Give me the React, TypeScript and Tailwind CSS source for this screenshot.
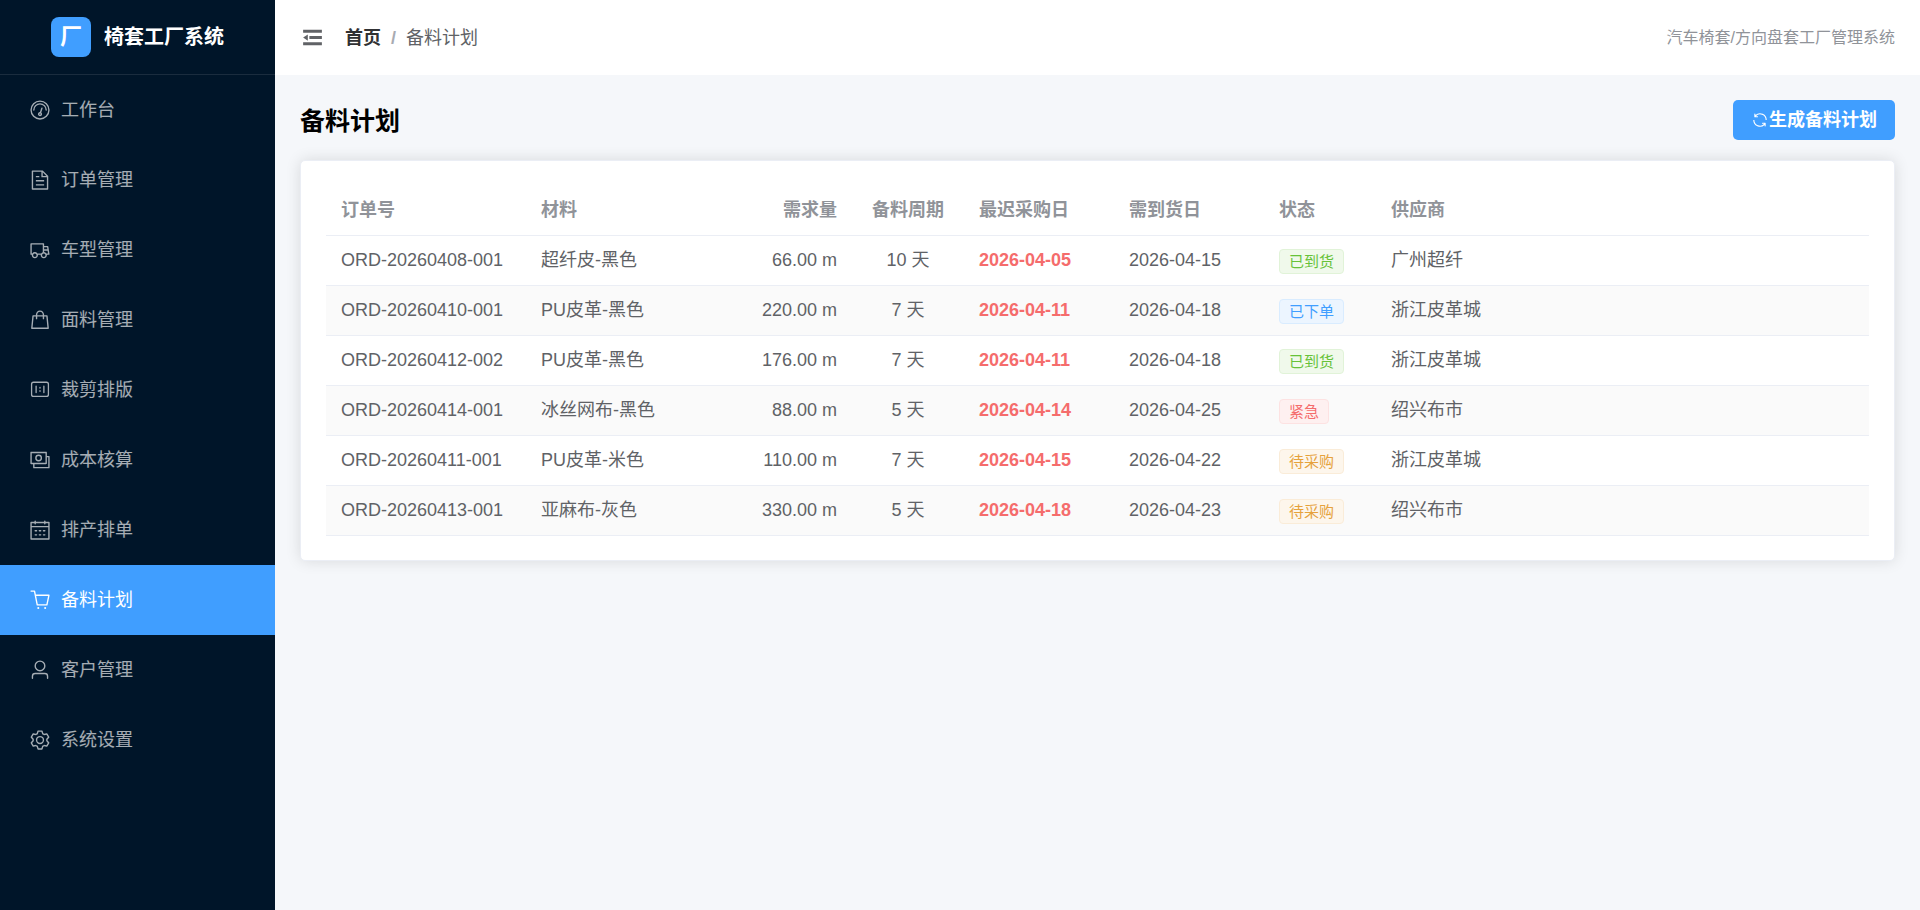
import { useState, type FC } from "react";

const icons: Record<string, string> = {
  odometer:
    "M512 896a384 384 0 1 0 0-768 384 384 0 0 0 0 768m0 64a448 448 0 1 1 0-896 448 448 0 0 1 0 896M192 512a320 320 0 1 1 640 0 32 32 0 1 1-64 0 256 256 0 1 0-512 0 32 32 0 0 1-64 0M570.432 627.84A96 96 0 1 1 509.568 608l60.992-187.776A32 32 0 1 1 631.424 440l-60.992 187.776zM502.08 734.464a32 32 0 1 0 19.84-60.928 32 32 0 0 0-19.84 60.928",
  document:
    "M832 384H576V128H192v768h640zm-26.496-64L640 154.496V320zM160 64h480l256 256v608a32 32 0 0 1-32 32H160a32 32 0 0 1-32-32V96a32 32 0 0 1 32-32m160 448h384v64H320zm0-192h160v64H320zm0 384h384v64H320z",
  van: "M128.896 736H96a32 32 0 0 1-32-32V224a32 32 0 0 1 32-32h576a32 32 0 0 1 32 32v96h164.544a32 32 0 0 1 31.616 27.136l54.144 352A32 32 0 0 1 922.688 736h-91.52a144 144 0 1 1-286.272 0H415.104a144 144 0 1 1-286.272 0zm23.36-64a143.872 143.872 0 0 1 239.488 0H568.32c17.088-25.6 42.24-45.376 71.744-55.808V256H128v416zm655.488 0h77.632l-19.648-128H704v64.896A144 144 0 0 1 807.744 672m48.128-192-14.72-96H704v96zM688 832a80 80 0 1 0 0-160 80 80 0 0 0 0 160m-416 0a80 80 0 1 0 0-160 80 80 0 0 0 0 160",
  goods:
    "M320 288v-22.336C320 154.688 405.504 64 512 64s192 90.688 192 201.664v22.4h131.072a32 32 0 0 1 31.808 28.8l57.6 576a32 32 0 0 1-31.808 35.2H131.328a32 32 0 0 1-31.808-35.2l57.6-576a32 32 0 0 1 31.808-28.8zm64 0h256v-22.336C640 189.248 582.272 128 512 128s-128 61.248-128 137.664v22.4zm-64 64H217.92l-51.2 512h690.56l-51.264-512H704v96a32 32 0 1 1-64 0v-96H384v96a32 32 0 0 1-64 0z",
  scale:
    "M813.176 180.706a60.235 60.235 0 0 1 60.236 60.235v481.883a60.235 60.235 0 0 1-60.236 60.235H210.824a60.235 60.235 0 0 1-60.236-60.235V240.94a60.235 60.235 0 0 1 60.236-60.235h602.352zm0-60.235H210.824A120.47 120.47 0 0 0 90.353 240.94v481.883a120.47 120.47 0 0 0 120.47 120.47h602.353a120.47 120.47 0 0 0 120.471-120.47V240.94a120.47 120.47 0 0 0-120.47-120.47zm-120.47 180.705a30.118 30.118 0 0 0-30.118 30.118v301.177a30.118 30.118 0 0 0 60.236 0V331.294a30.118 30.118 0 0 0-30.118-30.118m-361.412 0a30.118 30.118 0 0 0-30.118 30.118v301.177a30.118 30.118 0 1 0 60.236 0V331.294a30.118 30.118 0 0 0-30.118-30.118M512 361.412a30.118 30.118 0 0 0-30.118 30.117v30.118a30.118 30.118 0 0 0 60.236 0V391.53A30.118 30.118 0 0 0 512 361.412M512 512a30.118 30.118 0 0 0-30.118 30.118v30.117a30.118 30.118 0 0 0 60.236 0v-30.117A30.118 30.118 0 0 0 512 512",
  money:
    "M256 640v192h640V384H768v-64h150.976c14.272 0 19.456 1.472 24.64 4.288a29.06 29.06 0 0 1 12.16 12.096c2.752 5.184 4.224 10.368 4.224 24.64v493.952c0 14.272-1.472 19.456-4.288 24.64a29.06 29.06 0 0 1-12.096 12.16c-5.184 2.752-10.368 4.224-24.64 4.224H233.024c-14.272 0-19.456-1.472-24.64-4.288a29.06 29.06 0 0 1-12.16-12.096c-2.688-5.184-4.224-10.368-4.224-24.576V640zM768 192H128v448h640zm64-22.976v493.952c0 14.272-1.472 19.456-4.288 24.64a29.06 29.06 0 0 1-12.096 12.16c-5.184 2.752-10.368 4.224-24.64 4.224H105.024c-14.272 0-19.456-1.472-24.64-4.288a29.06 29.06 0 0 1-12.16-12.096C65.536 682.432 64 677.248 64 663.04V169.024c0-14.272 1.472-19.456 4.288-24.64a29.06 29.06 0 0 1 12.096-12.16C85.568 129.536 90.752 128 104.96 128h685.952c14.272 0 19.456 1.472 24.64 4.288a29.06 29.06 0 0 1 12.16 12.096c2.752 5.184 4.224 10.368 4.224 24.64zM448 576a160 160 0 1 1 0-320 160 160 0 0 1 0 320m0-64a96 96 0 1 0 0-192 96 96 0 0 0 0 192",
  calendar:
    "M128 384v512h768V192H768v32a32 32 0 1 1-64 0v-32H320v32a32 32 0 0 1-64 0v-32H128v128h768v64zm192-256h384V96a32 32 0 1 1 64 0v32h160a32 32 0 0 1 32 32v768a32 32 0 0 1-32 32H96a32 32 0 0 1-32-32V160a32 32 0 0 1 32-32h160V96a32 32 0 0 1 64 0zm-32 384h64a32 32 0 0 1 0 64h-64a32 32 0 0 1 0-64m0 192h64a32 32 0 1 1 0 64h-64a32 32 0 1 1 0-64m192-192h64a32 32 0 0 1 0 64h-64a32 32 0 0 1 0-64m0 192h64a32 32 0 1 1 0 64h-64a32 32 0 1 1 0-64m192-192h64a32 32 0 1 1 0 64h-64a32 32 0 1 1 0-64m0 192h64a32 32 0 1 1 0 64h-64a32 32 0 1 1 0-64",
  cart: "M432 928a48 48 0 1 1 0-96 48 48 0 0 1 0 96m320 0a48 48 0 1 1 0-96 48 48 0 0 1 0 96M96 128a32 32 0 0 1 0-64h160a32 32 0 0 1 31.36 25.728L320.64 256H928a32 32 0 0 1 31.296 38.72l-96 448A32 32 0 0 1 832 768H384a32 32 0 0 1-31.36-25.728L229.76 128zm314.24 576h395.904l82.304-384H333.44z",
  user: "M512 512a192 192 0 1 0 0-384 192 192 0 0 0 0 384m0 64a256 256 0 1 1 0-512 256 256 0 0 1 0 512m320 320v-96a96 96 0 0 0-96-96H288a96 96 0 0 0-96 96v96a32 32 0 1 1-64 0v-96a160 160 0 0 1 160-160h448a160 160 0 0 1 160 160v96a32 32 0 1 1-64 0",
  setting:
    "M600.704 64a32 32 0 0 1 30.464 22.208l35.2 109.376c14.784 7.232 28.928 15.36 42.432 24.512l112.384-24.192a32 32 0 0 1 34.432 15.36L944.32 364.8a32 32 0 0 1-4.032 37.504l-77.12 85.12a357 357 0 0 1 0 49.024l77.12 85.248a32 32 0 0 1 4.032 37.504l-88.704 153.6a32 32 0 0 1-34.432 15.296L708.8 803.904c-13.44 9.088-27.648 17.28-42.368 24.512l-35.264 109.376A32 32 0 0 1 600.704 960H423.296a32 32 0 0 1-30.464-22.208L357.696 828.48a352 352 0 0 1-42.56-24.64l-112.32 24.256a32 32 0 0 1-34.432-15.36L79.68 659.2a32 32 0 0 1 4.032-37.504l77.12-85.248a357 357 0 0 1 0-48.896l-77.12-85.248A32 32 0 0 1 79.68 364.8l88.704-153.6a32 32 0 0 1 34.432-15.296l112.32 24.256c13.568-9.152 27.776-17.408 42.56-24.64l35.2-109.312A32 32 0 0 1 423.232 64H600.64zm-23.424 64H446.72l-36.352 113.088-24.512 11.968a294 294 0 0 0-34.816 20.096l-22.656 15.36-116.224-25.088-65.28 113.152 79.68 88.192-1.92 27.136a293 293 0 0 0 0 40.192l1.92 27.136-79.808 88.192 65.344 113.152 116.224-25.024 22.656 15.296a294 294 0 0 0 34.816 20.096l24.512 11.968L446.72 896h130.688l36.48-113.152 24.448-11.904a288 288 0 0 0 34.752-20.096l22.592-15.296 116.288 25.024 65.28-113.152-79.744-88.192 1.92-27.136a293 293 0 0 0 0-40.256l-1.92-27.136 79.808-88.128-65.344-113.152-116.288 24.96-22.592-15.232a288 288 0 0 0-34.752-20.096l-24.448-11.904L577.344 128zM512 320a192 192 0 1 1 0 384 192 192 0 0 1 0-384m0 64a128 128 0 1 0 0 256 128 128 0 0 0 0-256",
  fold: "M896 192H128v128h768zm0 256H384v128h512zm0 256H128v128h768zM320 384 128 512l192 128z",
  refresh:
    "M771.776 794.88A384 384 0 0 1 128 512h64a320 320 0 0 0 555.712 216.448H654.72a32 32 0 1 1 0-64h149.056a32 32 0 0 1 32 32v148.928a32 32 0 1 1-64 0v-50.56zM276.288 295.616h92.992a32 32 0 0 1 0 64H220.16a32 32 0 0 1-32-32V178.56a32 32 0 0 1 64 0v50.56A384 384 0 0 1 896.128 512h-64a320 320 0 0 0-555.776-216.384z",
};

type IconProps = {
  name: string;
  className: string;
};

const Icon: FC<IconProps> = ({ name, className }) => (
  <svg
    viewBox="0 0 1024 1024"
    fill="currentColor"
    aria-hidden="true"
    className={`shrink-0 ${className}`}
  >
    <path d={icons[name]} />
  </svg>
);

const menu = [
  { icon: "odometer", label: "工作台" },
  { icon: "document", label: "订单管理" },
  { icon: "van", label: "车型管理" },
  { icon: "goods", label: "面料管理" },
  { icon: "scale", label: "裁剪排版" },
  { icon: "money", label: "成本核算" },
  { icon: "calendar", label: "排产排单" },
  { icon: "cart", label: "备料计划" },
  { icon: "user", label: "客户管理" },
  { icon: "setting", label: "系统设置" },
];

type Plan = {
  order: string;
  material: string;
  amount: string;
  days: number;
  buyDate: string;
  arriveDate: string;
  status: string;
  supplier: string;
};

const plans: Plan[] = [
  {
    order: "ORD-20260408-001",
    material: "超纤皮-黑色",
    amount: "66.00",
    days: 10,
    buyDate: "2026-04-05",
    arriveDate: "2026-04-15",
    status: "已到货",
    supplier: "广州超纤",
  },
  {
    order: "ORD-20260410-001",
    material: "PU皮革-黑色",
    amount: "220.00",
    days: 7,
    buyDate: "2026-04-11",
    arriveDate: "2026-04-18",
    status: "已下单",
    supplier: "浙江皮革城",
  },
  {
    order: "ORD-20260412-002",
    material: "PU皮革-黑色",
    amount: "176.00",
    days: 7,
    buyDate: "2026-04-11",
    arriveDate: "2026-04-18",
    status: "已到货",
    supplier: "浙江皮革城",
  },
  {
    order: "ORD-20260414-001",
    material: "冰丝网布-黑色",
    amount: "88.00",
    days: 5,
    buyDate: "2026-04-14",
    arriveDate: "2026-04-25",
    status: "紧急",
    supplier: "绍兴布市",
  },
  {
    order: "ORD-20260411-001",
    material: "PU皮革-米色",
    amount: "110.00",
    days: 7,
    buyDate: "2026-04-15",
    arriveDate: "2026-04-22",
    status: "待采购",
    supplier: "浙江皮革城",
  },
  {
    order: "ORD-20260413-001",
    material: "亚麻布-灰色",
    amount: "330.00",
    days: 5,
    buyDate: "2026-04-18",
    arriveDate: "2026-04-23",
    status: "待采购",
    supplier: "绍兴布市",
  },
];

const statusClass: Record<string, string> = {
  已到货: "bg-[#f0f9eb] border-[#e1f3d8] text-[#67c23a]",
  已下单: "bg-[#ecf5ff] border-[#d9ecff] text-[#409eff]",
  紧急: "bg-[#fef0f0] border-[#fde2e2] text-[#f56c6c]",
  待采购: "bg-[#fdf6ec] border-[#faecd8] text-[#e6a23c]",
};

const columns = [
  { label: "订单号", className: "w-[200px] text-left" },
  { label: "材料", className: "w-[188px] text-left" },
  { label: "需求量", className: "w-[138px] text-right" },
  { label: "备料周期", className: "w-[112px] text-center" },
  { label: "最迟采购日", className: "w-[150px] text-left" },
  { label: "需到货日", className: "w-[150px] text-left" },
  { label: "状态", className: "w-[112px] text-left" },
  { label: "供应商", className: "text-left" },
];

const Sidebar: FC = () => {
  const [active, setActive] = useState("备料计划");

  return (
    <aside className="w-[275px] shrink-0 bg-[#001529]">
      <div className="flex h-[75px] items-center justify-center gap-[13px] border-b border-white/10">
        <div className="flex size-10 items-center justify-center rounded-lg bg-[#409eff] text-[22px] leading-none font-bold text-white">
          厂
        </div>
        <span className="text-xl font-bold text-white">椅套工厂系统</span>
      </div>

      <nav>
        {menu.map((item) => (
          <a
            key={item.label}
            href="#"
            onClick={(e) => {
              e.preventDefault();
              setActive(item.label);
            }}
            className={`flex h-[70px] items-center gap-1.5 px-[25px] ${
              item.label === active
                ? "bg-[#409eff] text-white"
                : "text-white/65 hover:text-white"
            }`}
          >
            <span className="flex w-[30px] justify-center">
              <Icon name={item.icon} className="size-[22px]" />
            </span>
            <span>{item.label}</span>
          </a>
        ))}
      </nav>
    </aside>
  );
};

const PlanTable: FC = () => (
  <table className="w-full table-fixed border-collapse">
    <thead>
      <tr className="h-[49px] border-b border-[#ebeef5] text-[#909399]">
        {columns.map((col) => (
          <th key={col.label} className={`px-[15px] font-bold ${col.className}`}>
            {col.label}
          </th>
        ))}
      </tr>
    </thead>
    <tbody>
      {plans.map((plan) => (
        <tr
          key={plan.order}
          className="h-[50px] border-b border-[#ebeef5] text-[#606266] even:bg-[#fafafa]"
        >
          <td className="px-[15px] whitespace-nowrap">{plan.order}</td>
          <td className="px-[15px] whitespace-nowrap">{plan.material}</td>
          <td className="px-[15px] text-right">{plan.amount} m</td>
          <td className="px-[15px] text-center">{plan.days} 天</td>
          <td className="px-[15px] font-bold text-[#f56c6c]">{plan.buyDate}</td>
          <td className="px-[15px]">{plan.arriveDate}</td>
          <td className="px-[15px]">
            <span
              className={`inline-flex h-[25px] items-center rounded border px-[9px] align-middle text-[15px] leading-none ${
                statusClass[plan.status]
              }`}
            >
              {plan.status}
            </span>
          </td>
          <td className="px-[15px]">{plan.supplier}</td>
        </tr>
      ))}
    </tbody>
  </table>
);

const App: FC = () => {
  return (
    <div className="flex min-h-screen bg-[#f5f7fa] font-['Liberation_Sans','Noto_Sans_CJK_SC',sans-serif] text-[18px] leading-7">
      <Sidebar />

      <div className="flex min-w-0 flex-1 flex-col">
        <header className="flex h-[75px] items-center justify-between bg-white px-[25px]">
          <div className="flex items-center gap-5">
            <button
              type="button"
              aria-label="折叠菜单"
              className="cursor-pointer text-[#606266]"
            >
              <Icon name="fold" className="block size-[25px]" />
            </button>
            <nav className="flex items-center gap-2.5">
              <a href="#" className="font-bold text-[#303133]">
                首页
              </a>
              <span className="font-bold text-[#a8abb2]">/</span>
              <span className="text-[#606266]">备料计划</span>
            </nav>
          </div>
          <span className="text-base text-[#909399]">
            汽车椅套/方向盘套工厂管理系统
          </span>
        </header>

        <main className="p-[25px]">
          <div className="mb-[18px] flex items-start justify-between">
            <h1 className="text-[25px] leading-[42px] font-bold text-black">
              备料计划
            </h1>
            <button
              type="button"
              className="flex h-10 cursor-pointer items-center rounded-[5px] bg-[#409eff] px-[18px] font-bold text-white hover:bg-[#79bbff]"
            >
              <Icon name="refresh" className="size-[18px]" />
              生成备料计划
            </button>
          </div>

          <section className="rounded-[5px] border border-[#ebeef5] bg-white px-[25px] pt-[25px] pb-6 shadow-[0_0_15px_rgba(0,0,0,0.12)]">
            <PlanTable />
          </section>
        </main>
      </div>
    </div>
  );
};

export default App;
